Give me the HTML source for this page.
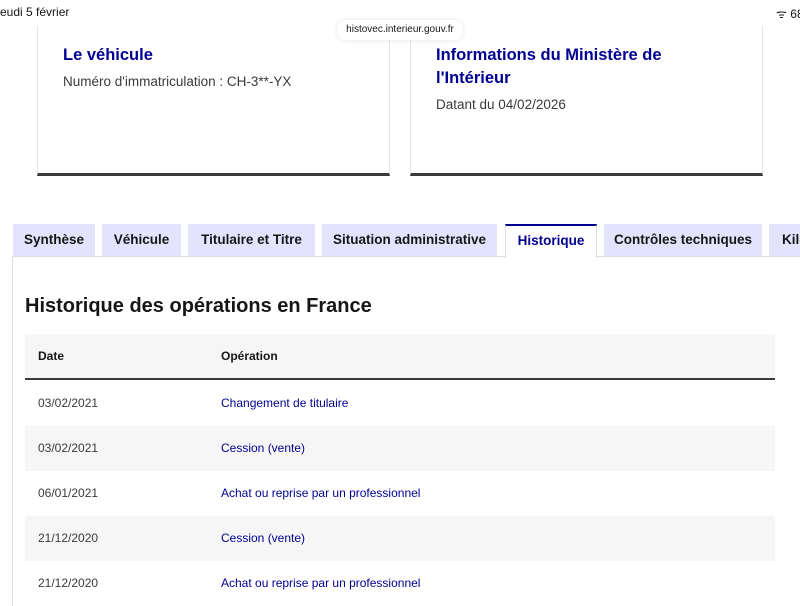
<!DOCTYPE html>
<html><head><meta charset="utf-8"><style>
*{margin:0;padding:0;box-sizing:border-box}
body{width:800px;height:600px;overflow:hidden;background:#fff;font-family:"Liberation Sans",sans-serif;position:relative;color:#161616}
.abs{position:absolute}
.card{position:absolute;top:-10px;height:186px;border:1px solid #e5e5e5;border-bottom:3px solid #3a3a3a;background:#fff}
.card h2{position:absolute;left:25px;font-size:16.5px;color:#000091;font-weight:bold;line-height:23px}
.card p{position:absolute;left:25px;font-size:13.5px;color:#3a3a3a}
.tab{position:absolute;top:224px;height:32px;background:#e3e3fd;font-size:13.5px;font-weight:bold;color:#161616;line-height:32px;text-align:center;white-space:nowrap;overflow:hidden}
.tab.act{background:#fff;color:#000091;border-top:2px solid #000091;line-height:30px;height:34px;border-left:1px solid #ddd;border-right:1px solid #ddd}
.row{position:absolute;left:25px;width:750px;height:45px;font-size:12px;line-height:45px}
.row .d{position:absolute;left:13px;color:#3a3a3a}
.row .o{position:absolute;left:196px;color:#000091}
</style></head><body>
<div class="card" style="left:37px;width:353px"><h2 style="top:53px">Le véhicule</h2><p style="top:83px">Numéro d'immatriculation : CH-3**-YX</p></div>
<div class="card" style="left:410px;width:353px"><h2 style="top:53px">Informations du Ministère de<br>l'Intérieur</h2><p style="top:106px">Datant du 04/02/2026</p></div>
<div class="abs" style="left:0;top:0;width:800px;height:26px;background:#fff"></div>
<div class="abs" style="left:0;top:5px;font-size:12px">eudi 5 février</div>
<div class="abs" style="left:776px;top:5px;font-size:12px;white-space:nowrap">ᯤ 68</div>
<div class="abs" style="left:337px;top:20px;width:126px;height:20px;background:#fff;border-radius:8px;box-shadow:0 0 6px rgba(0,0,0,.12);font-size:10px;text-align:center;line-height:20px">histovec.interieur.gouv.fr</div>
<div class="abs" style="left:12px;top:256px;width:800px;height:350px;border-left:1px solid #ddd;border-top:1px solid #ddd"></div>
<div class="tab" style="left:13px;width:82px">Synthèse</div>
<div class="tab" style="left:102px;width:79px">Véhicule</div>
<div class="tab" style="left:188px;width:127px">Titulaire et Titre</div>
<div class="tab" style="left:322px;width:175px">Situation administrative</div>
<div class="tab act" style="left:505px;width:92px">Historique</div>
<div class="tab" style="left:604px;width:158px">Contrôles techniques</div>
<div class="tab" style="left:769px;width:40px;text-align:left;padding-left:13px">Kilo</div>
<div class="abs" style="left:25px;top:295px;font-size:20px;font-weight:bold">Historique des opérations en France</div>
<div class="row" style="top:334px;height:46px;background:#f6f6f6;border-bottom:2px solid #3a3a3a;font-weight:bold"><span class="d" style="color:#161616">Date</span><span class="o" style="color:#161616">Opération</span></div>
<div class="row" style="top:381px"><span class="d">03/02/2021</span><span class="o">Changement de titulaire</span></div>
<div class="row" style="top:426px;background:#f6f6f6"><span class="d">03/02/2021</span><span class="o">Cession (vente)</span></div>
<div class="row" style="top:471px"><span class="d">06/01/2021</span><span class="o">Achat ou reprise par un professionnel</span></div>
<div class="row" style="top:516px;background:#f6f6f6"><span class="d">21/12/2020</span><span class="o">Cession (vente)</span></div>
<div class="row" style="top:561px"><span class="d">21/12/2020</span><span class="o">Achat ou reprise par un professionnel</span></div>
</body></html>
